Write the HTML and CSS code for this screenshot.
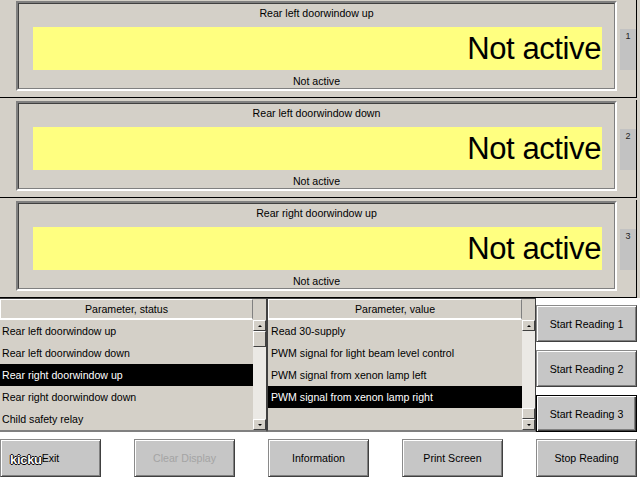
FILE: index.html
```html
<!DOCTYPE html>
<html>
<head>
<meta charset="utf-8">
<link rel="stylesheet" href="styles.css">
</head>
<body>
<div class="top">
  <div class="row">
    <div class="frame"><div class="frame-in">
      <div class="title">Rear left doorwindow up</div>
      <div class="bar">Not active</div>
      <div class="status">Not active</div>
    </div></div>
    <div class="tab">1</div>
  </div>
  <div class="row">
    <div class="frame"><div class="frame-in">
      <div class="title">Rear left doorwindow down</div>
      <div class="bar">Not active</div>
      <div class="status">Not active</div>
    </div></div>
    <div class="tab">2</div>
  </div>
  <div class="row">
    <div class="frame"><div class="frame-in">
      <div class="title">Rear right doorwindow up</div>
      <div class="bar">Not active</div>
      <div class="status">Not active</div>
    </div></div>
    <div class="tab">3</div>
  </div>
</div>
<div class="lower">
  <div class="list list-a">
    <div class="lbody">
      <div class="hdr">Parameter, status</div>
      <div class="item">Rear left doorwindow up</div>
      <div class="item">Rear left doorwindow down</div>
      <div class="item sel">Rear right doorwindow up</div>
      <div class="item">Rear right doorwindow down</div>
      <div class="item">Child safety relay</div>
    </div>
    <div class="sb">
      <div class="sb-btn"><span class="tri-up"></span></div>
      <div class="sb-track"><div class="thumb"></div></div>
      <div class="sb-btn"><span class="tri-down"></span></div>
    </div>
  </div>
  <div class="list list-b">
    <div class="lbody">
      <div class="hdr">Parameter, value</div>
      <div class="item">Read 30-supply</div>
      <div class="item">PWM signal for light beam level control</div>
      <div class="item">PWM signal from xenon lamp left</div>
      <div class="item sel">PWM signal from xenon lamp right</div>
      <div class="item"></div>
    </div>
    <div class="sb">
      <div class="sb-btn"><span class="tri-up"></span></div>
      <div class="sb-track end"><div class="thumb short"></div></div>
      <div class="sb-btn"><span class="tri-down"></span></div>
    </div>
  </div>
  <div class="side">
    <div class="btn">Start Reading 1</div>
    <div class="btn">Start Reading 2</div>
    <div class="btn default">Start Reading 3</div>
  </div>
</div>
<div class="bottom">
  <div class="btn wide">Exit</div>
  <div class="btn wide disabled">Clear Display</div>
  <div class="btn wide">Information</div>
  <div class="btn wide">Print Screen</div>
  <div class="btn wide">Stop Reading</div>
</div>
<div class="watermark">kicku</div>
</body>
</html>
```
FILE: styles.css
```css
* { box-sizing: border-box; }
body {
  margin: 0;
  width: 640px;
  height: 480px;
  overflow: hidden;
  position: relative;
  background: #d4d0c8;
  font-family: "Liberation Sans", Arial, sans-serif;
  font-size: 10.6px;
  color: #000;
}
.row {
  display: flex;
  align-items: flex-start;
  width: 637px;
  height: 98px;
  padding: 1px 0 0 16px;
  border-right: 1px solid #000;
  border-bottom: 1px solid #000;
}
.row + .row { margin-top: 2px; }
.frame {
  width: 601px;
  border: 2px solid;
  border-color: #808080 #fff #fff #808080;
}
.frame-in {
  border: 1px solid;
  border-color: #404040 #808080 #808080 #404040;
}
.title {
  line-height: 18px;
  text-align: center;
}
.bar {
  margin: 5px 12px 0 14px;
  height: 43px;
  background: #ffff80;
  font-size: 31px;
  line-height: 43px;
  text-align: right;
  letter-spacing: -0.4px;
  padding-right: 1px;
}
.status {
  margin-top: 4px;
  line-height: 14px;
  text-align: center;
}
.tab {
  margin: 28px 0 0 3px;
  width: 16px;
  height: 41px;
  background: #c2c2c2;
  font-size: 9px;
  line-height: 12px;
  padding-top: 1px;
  text-align: center;
  color: #222;
}
.lower {
  display: flex;
  height: 134px;
  background: #fff;
}
.list {
  display: flex;
  background: #d4d0c8;
  border-top: 1px solid #404040;
  border-bottom: 2px solid #808080;
}
.list-a {
  width: 267px;
  border-right: 1px solid #404040;
}
.list-b {
  width: 269px;
  border-left: 1px solid #404040;
  border-right: 1px solid #404040;
}
.lbody {
  flex: 1;
  min-width: 0;
}
.hdr {
  height: 21px;
  line-height: 18px;
  text-align: center;
  border-top: 1px solid #fff;
  border-left: 1px solid #fff;
  border-bottom: 2px solid #fff;
  border-right: 1px solid #808080;
}
.item {
  height: 22px;
  line-height: 22px;
  padding-left: 2px;
  white-space: nowrap;
  overflow: hidden;
}
.list-b .item { padding-left: 3px; }
.item.sel {
  background: #000;
  color: #fff;
}
.sb {
  width: 13px;
  padding-top: 21px;
  display: flex;
  flex-direction: column;
}
.sb-btn {
  height: 11px;
  background: #d4d0c8;
  border: 1px solid;
  border-color: #fff #404040 #404040 #fff;
  display: flex;
  align-items: center;
  justify-content: center;
}
.tri-up, .tri-down {
  width: 0;
  height: 0;
  border-left: 2px solid transparent;
  border-right: 2px solid transparent;
}
.tri-up { border-bottom: 2px solid #000; }
.tri-down { border-top: 2px solid #000; }
.sb-track {
  flex: 1;
  background: #ebe9e5;
  display: flex;
  flex-direction: column;
}
.sb-track.end { justify-content: flex-end; }
.thumb {
  height: 16px;
  background: #d4d0c8;
  border: 1px solid;
  border-color: #fff #404040 #404040 #fff;
}
.thumb.short { height: 11px; }
.side {
  flex: 1;
  padding-top: 7px;
  display: flex;
  flex-direction: column;
  gap: 8px;
}
.btn {
  width: 101px;
  height: 37px;
  background: #c6c6c6;
  border: 1px solid;
  border-color: #8a8a8a #404040 #404040 #8a8a8a;
  box-shadow: inset 1px 1px 0 #fff, inset -1px -1px 0 #808080;
  display: flex;
  align-items: center;
  justify-content: center;
  white-space: nowrap;
}
.btn.default {
  border-color: #000;
  box-shadow: inset 1px 1px 0 #fff, inset -1px -1px 0 #404040, inset -2px -2px 0 #808080;
}
.bottom {
  display: flex;
  justify-content: space-between;
  height: 48px;
  padding: 7px 3px 0 0;
  background: #fff;
}
.btn.wide { height: 38px; }
.btn.disabled { color: #a4a4a4; }
.watermark {
  position: absolute;
  left: 10px;
  top: 452px;
  font-weight: bold;
  font-size: 13px;
  letter-spacing: -0.3px;
  color: #fff;
  text-shadow: 1px 0 0 #000, -1px 0 0 #000, 0 1px 0 #000, 0 -1px 0 #000;
}
```
